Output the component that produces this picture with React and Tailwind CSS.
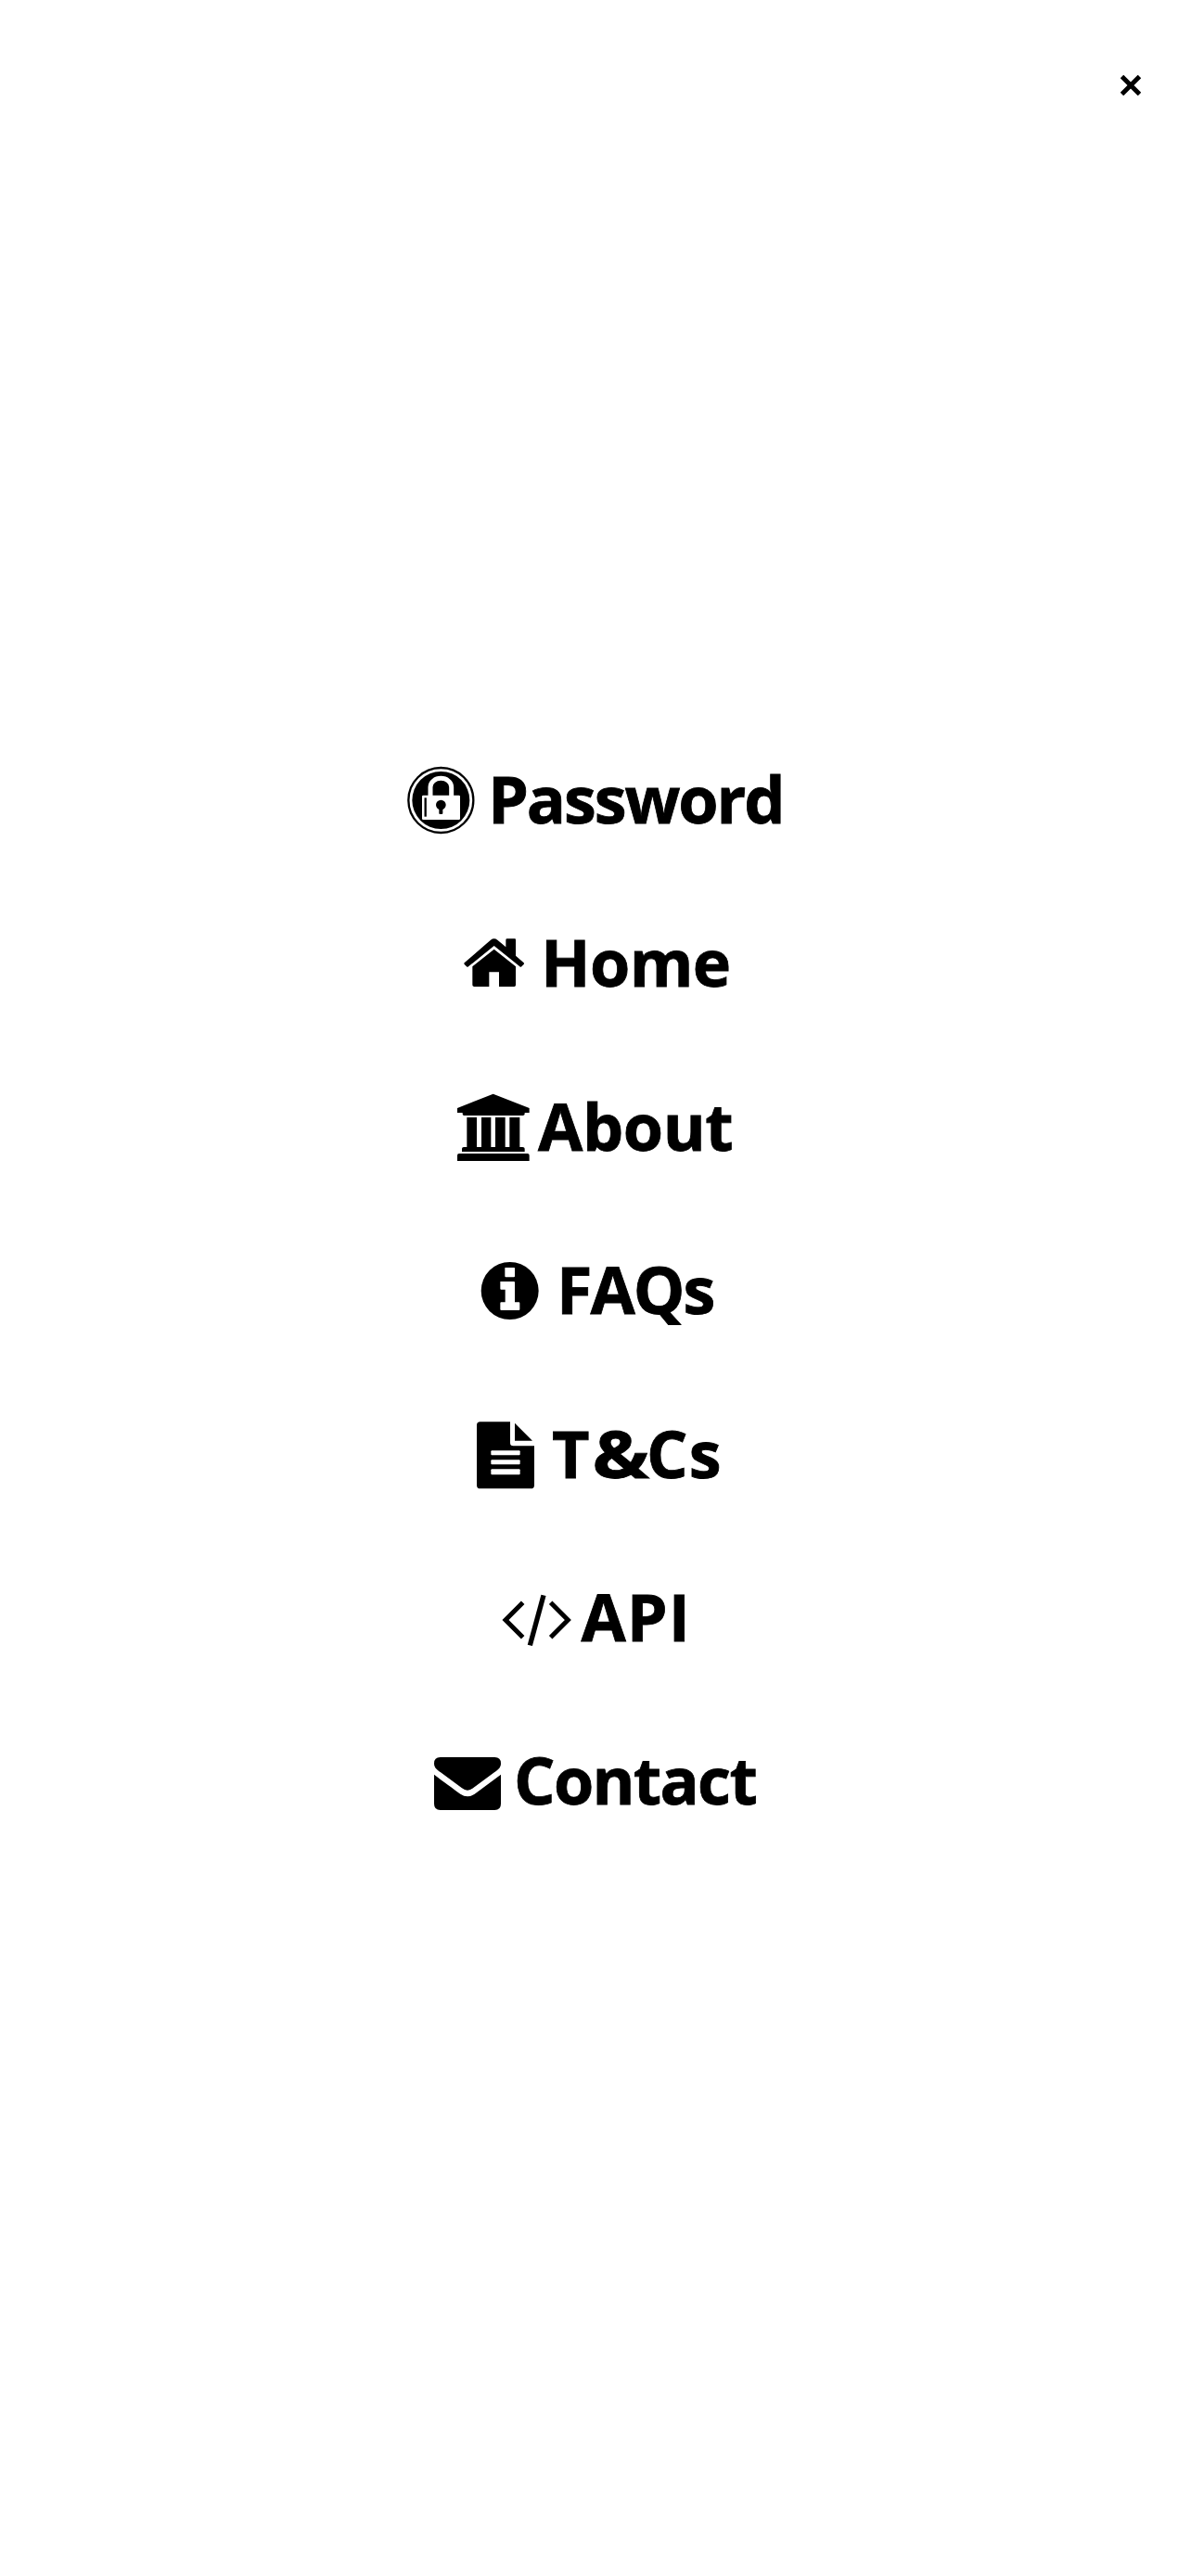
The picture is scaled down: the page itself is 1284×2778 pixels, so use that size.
function Icon({ className, viewBox, children }) {
  return (
    <svg className={`h-[100px] shrink-0 ${className}`} viewBox={viewBox} fill="currentColor" aria-hidden="true">
      {children}
    </svg>
  );
}

const items = [
  {
    label: 'Password',
    row: 'pl-[439px]',
    text: 'ml-[14px] tracking-[-2.1px]',
    icon: (
      <Icon className="w-[73px]" viewBox="57 9 219 300">
        <circle cx="166" cy="159" r="105" fill="none" stroke="currentColor" strokeWidth="7" />
        <circle cx="166" cy="159" r="93" />
        <path d="M132 145V116A34 28 0 0 1 200 116V145" fill="none" stroke="white" strokeWidth="15" />
        <rect x="105" y="143" width="123" height="79" rx="4" fill="white" />
        <path d="M116 151V212" stroke="currentColor" strokeWidth="7" />
        <circle cx="166" cy="174" r="16" />
        <path d="M160 181H172V201Q172 204 169 204H163Q160 204 160 201Z" />
      </Icon>
    ),
  },
  {
    label: 'Home',
    row: 'pl-[500px]',
    text: 'ml-[18px] tracking-[-0.6px]',
    icon: (
      <Icon className="w-[65px]" viewBox="60 -3 195 300">
        <path d="M62 145L147 71Q158 63 169 71L196 94V71Q196 67 200 67H225Q228 67 228 71V122L254 145Q256 147 254 150L247 157Q244 160 241 157L158 90L75 157Q72 160 69 157L62 150Q60 147 62 145Z" />
        <path d="M158 101L228 157V217Q228 222 223 222H174V175H142V222H94Q88 222 88 217V157Z" />
      </Icon>
    ),
  },
  {
    label: 'About',
    row: 'pl-[493px]',
    text: 'ml-[9px] tracking-[-0.4px]',
    icon: (
      <Icon className="w-[78px]" viewBox="39 3 234 300">
        <path d="M155 44L272 90V105H257V109Q257 114 251 114H61Q56 114 56 109V105H39V90Z" />
        <path d="M70 120H102V216H117V120H148V216H162V120H194V216H208V120H241V216H250Q257 216 257 221V231H54V221Q54 216 60 216H70Z" />
        <path d="M39 261V243Q39 237 45 237H266Q272 237 272 243V261Z" />
      </Icon>
    ),
  },
  {
    label: 'FAQs',
    row: 'pl-[518px]',
    text: 'ml-[19px] tracking-[-2px]',
    icon: (
      <Icon className="w-[63px]" viewBox="54 -9 189 300">
        <circle cx="149" cy="141" r="93" />
        <path d="M134 66H163Q165 66 165 68V94Q165 97 162 97H136Q133 97 133 94V67ZM118 111H162Q165 111 165 114V178H178Q181 178 181 181V201Q181 204 178 204H121Q118 204 118 201V181Q118 178 121 178H134V137H121Q118 137 118 134Z" fill="white" />
      </Icon>
    ),
  },
  {
    label: (
      <>
        T<span className="mr-px ml-[6px] inline-block scale-x-[1.17]">&amp;</span>Cs
      </>
    ),
    row: 'pl-[514px]',
    text: 'ml-[19px] tracking-[1px]',
    icon: (
      <Icon className="w-[62px]" viewBox="42 11 186 300">
        <path d="M53 54H150V122Q150 132 160 132H228V259Q228 270 217 270H53Q42 270 42 259V65Q42 54 53 54Z" />
        <path d="M165 58L222 115H165Z" />
        <g fill="white">
          <rect x="88" y="147" width="94" height="15" rx="3" />
          <rect x="88" y="177" width="94" height="15" rx="3" />
          <rect x="88" y="207" width="94" height="18" rx="3" />
        </g>
      </Icon>
    ),
  },
  {
    label: 'API',
    row: 'pl-[541px]',
    text: 'ml-[10.5px] tracking-[1px]',
    icon: (
      <Icon className="w-[75px]" viewBox="63 -15 225 300">
        <g fill="none" stroke="currentColor" strokeWidth="15" strokeLinejoin="miter">
          <path d="M131 85L75 141L131 197" />
          <path d="M221 85L277 141L221 197" />
          <path d="M198 61L154 223" strokeWidth="16" />
        </g>
      </Icon>
    ),
  },
  {
    label: 'Contact',
    row: 'pl-[468px]',
    text: 'ml-[14px] tracking-[-1.7px]',
    icon: (
      <Icon className="w-[72px]" viewBox="54 -12 216 300">
        <path d="M74 60H250Q270 60 270 80C270 94 260 101 250 108L180 160Q162 174 144 160L74 108C64 101 54 94 54 80Q54 60 74 60Z" />
        <path d="M54 116C90 144 110 157 139 179Q162 194 185 179L270 116V211Q270 231 250 231H74Q54 231 54 211Z" />
      </Icon>
    ),
  },
];

export default function App() {
  return (
    <main className="flex h-[2778px] w-[1284px] flex-col overflow-hidden bg-white text-black">
      <header className="flex h-[813px] items-start justify-end pt-[81px] pr-[54px]">
        <button aria-label="Close menu">
          <svg className="block size-[22px]" viewBox="0 0 22 22" fill="none" stroke="currentColor" strokeWidth="5">
            <path d="M1.5 1.5L20.5 20.5M20.5 1.5L1.5 20.5" />
          </svg>
        </button>
      </header>
      <nav className="flex flex-col gap-[76.4px]">
        {items.map((item) => (
          <a key={item.row} href="#" className={`flex h-[100px] items-start ${item.row}`}>
            {item.icon}
            <span className={`font-['Open_Sans',sans-serif] text-[70px] leading-[97px] font-bold whitespace-nowrap [-webkit-text-stroke:0.8px_black] ${item.text}`}>
              {item.label}
            </span>
          </a>
        ))}
      </nav>
    </main>
  );
}
